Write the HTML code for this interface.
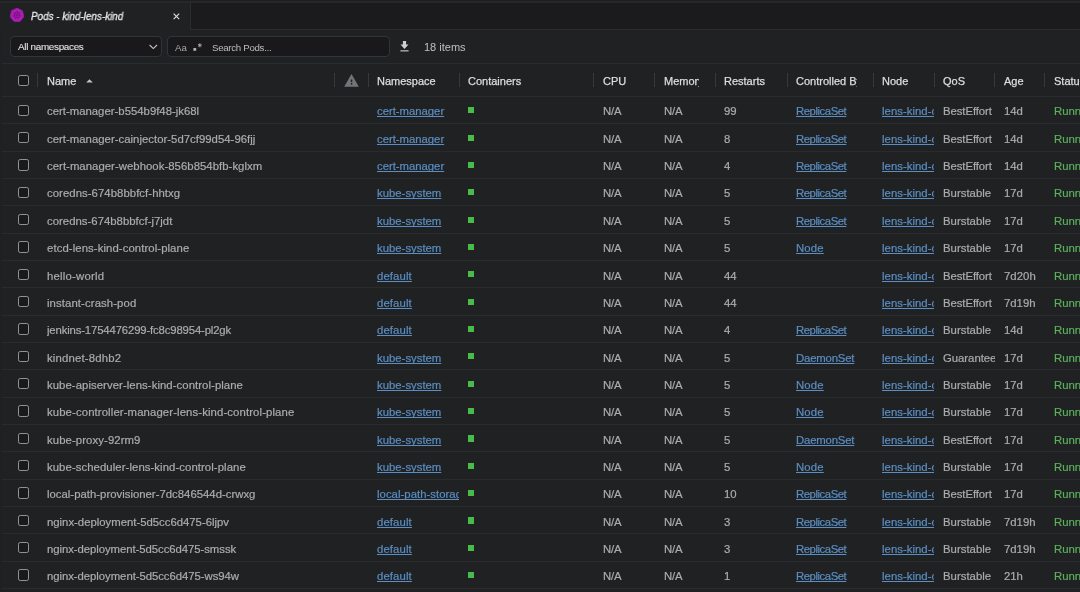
<!DOCTYPE html><html><head><meta charset="utf-8"><style>*{box-sizing:border-box;margin:0;padding:0}
html,body{width:1080px;height:592px;overflow:hidden;background:#202123;font-family:"Liberation Sans",sans-serif;position:relative}
body>*{position:absolute}
.c,.hd,#tabtitle,.items,.sel span,.search span{will-change:transform}
#top{left:0;top:0;width:1080px;height:1px;background:#1e1e20}
#topline{left:0;top:1px;width:1080px;height:2px;background:#262729}
#tabbar{left:0;top:3px;width:1080px;height:27px;background:#1b1b1d}
#tab{left:0;top:3px;width:190px;height:27px;background:#202123}
#tabsep{left:190px;top:2px;width:1px;height:28px;background:#2b2d30}
#tabbot{left:191px;top:29px;width:889px;height:1px;background:#2b2d30}
#k8s{left:10.3px;top:8.4px}
#tabtitle{left:30.5px;top:10.3px;font-size:10.8px;font-style:italic;color:#e8e8e8;white-space:nowrap;-webkit-text-stroke:0.3px #e8e8e8;line-height:12px;transform:scaleX(0.915);transform-origin:0 0}
#tabx{left:173px;top:13.4px}
#leftline{left:0;top:28px;width:2px;height:564px;background:#1f2022}
.sel{left:10px;top:36px;width:152px;height:20.6px;border:1px solid #333437;border-radius:4px;background:#19191b}
.sel span{-webkit-text-stroke:0.1px currentColor;position:absolute;left:6.5px;top:3.7px;font-size:9.9px;letter-spacing:-0.3px;color:#e0e0e0;line-height:12px;white-space:nowrap}
.chev{position:absolute;left:137.5px;top:6.8px}
.search{left:167px;top:36px;width:223px;height:20.6px;border:1px solid #333437;border-radius:4px;background:#19191b}
.search span{position:absolute;top:5.1px;font-size:9.7px;color:#bcbcbc;white-space:nowrap;line-height:12px}
.aa{left:6.5px;color:#a8a8a8 !important}
.rx{position:absolute;left:24.5px;top:6.1px}
.ph{left:44px;letter-spacing:-0.3px}
#dl{left:399.5px;top:40.8px}
.items{left:423.5px;top:40.5px;font-size:11px;color:#c0c0c0;white-space:nowrap;line-height:13px}
#tbline{left:2px;top:63px;width:1078px;height:1px;background:#2a2b2e}
.cb{left:18px;width:11.4px;height:11.4px;border:1.4px solid #939393;border-radius:2.2px;background:#1a1a1c}
.vs{top:73px;width:1px;height:14px;background:#38393c}
.hd{-webkit-text-stroke:0.25px currentColor;top:74.8px;font-size:11px;color:#dedede;white-space:nowrap;overflow:hidden;line-height:13px;height:15px}
#sortup{left:85.6px;top:78.7px}
#warn{left:344px;top:74px}
.hline{left:2px;width:1078px;height:1px;background:#2a2b2e}
.r{left:0;width:1080px;height:27.3px}
.r>*{position:absolute}
.cb2{left:18px;top:8.5px;width:11.3px;height:11.3px;border:1.4px solid #939393;border-radius:2.2px;background:#1a1a1c}
.c{-webkit-text-stroke:0.2px currentColor;top:9.3px;font-size:11.35px;color:#acacac;white-space:nowrap;overflow:hidden;line-height:13px;height:16px}
.lnk{color:#5b8ec2;text-decoration:underline;text-decoration-skip-ink:none}
.grn{left:468px;top:11.1px;width:6.2px;height:6.2px;background:#48bb48}
.run{color:#5cb05c}
</style></head><body>
<div id="top"></div><div id="topline"></div>
<div id="tabbar"></div><div id="tab"></div><div id="tabsep"></div><div id="tabbot"></div>
<div id="leftline"></div>
<svg id="k8s" width="14" height="14" viewBox="0 0 14 14"><polygon points="7.00,0.10 12.47,2.74 13.82,8.66 10.04,13.41 3.96,13.41 0.18,8.66 1.53,2.74" fill="#ae1cb6" stroke="#ae1cb6" stroke-width="0.6" stroke-linejoin="round"/><circle cx="7.0" cy="7.1" r="2.9" fill="none" stroke="#6a1470" stroke-width="0.8"/><circle cx="7.0" cy="7.1" r="1" fill="#6a1470"/><path d="M7.00 5.90L7.00 2.50M7.94 6.35L10.60 4.23M8.17 7.37L11.48 8.12M7.52 8.18L9.00 11.24M6.48 8.18L5.00 11.24M5.83 7.37L2.52 8.12M6.06 6.35L3.40 4.23" stroke="#6a1470" stroke-width="0.6"/></svg>
<div id="tabtitle">Pods - kind-lens-kind</div>
<svg id="tabx" width="7" height="7" viewBox="0 0 7 7"><path d="M0.6 0.6L6.2 6.2M6.2 0.6L0.6 6.2" stroke="#e0e0e0" stroke-width="1.1"/></svg>
<div class="sel"><span>All namespaces</span>
<svg class="chev" width="9" height="6" viewBox="0 0 9 6"><path d="M0.6 1L4.3 4.6L8 1" fill="none" stroke="#c8c8c8" stroke-width="1.1"/></svg></div>
<div class="search"><span class="aa">Aa</span>
<svg class="rx" width="11" height="9" viewBox="0 0 11 9"><rect x="0.4" y="5.0" width="2.8" height="2.8" fill="#b0b0b0"/><path d="M6.8 0.3V4.3M5 1.3L8.6 3.3M5 3.3L8.6 1.3" stroke="#b0b0b0" stroke-width="0.9"/></svg>
<span class="ph">Search Pods...</span></div>
<svg id="dl" width="10" height="11" viewBox="0 0 10 11"><path d="M2.9 0H6.1V3.6H8.5L4.5 7.9L0.5 3.6H2.9Z" fill="#d0d0d0"/><rect x="0.4" y="9.3" width="8.2" height="1.1" fill="#d0d0d0"/></svg>
<div class="items">18 items</div>
<div id="tbline"></div>

<div class="cb" style="top:74.6px"></div>
<div class="vs" style="left:37.3px"></div>
<div class="vs" style="left:334.3px"></div>
<div class="vs" style="left:368.1px"></div>
<div class="vs" style="left:459.1px"></div>
<div class="vs" style="left:593.4px"></div>
<div class="vs" style="left:654.3px"></div>
<div class="vs" style="left:715px"></div>
<div class="vs" style="left:787.3px"></div>
<div class="vs" style="left:873.4px"></div>
<div class="vs" style="left:934.3px"></div>
<div class="vs" style="left:994.4px"></div>
<div class="vs" style="left:1043.9px"></div>
<div class="hd" style="left:46.5px;width:60.00px">Name</div>
<div class="hd" style="left:377.3px;width:81.70px">Namespace</div>
<div class="hd" style="left:468px;width:120.00px">Containers</div>
<div class="hd" style="left:602.8px;width:45.00px">CPU</div>
<div class="hd" style="left:663.6px;width:34.50px">Memory</div>
<div class="hd" style="left:724.2px;width:55.00px">Restarts</div>
<div class="hd" style="left:796px;width:61.00px">Controlled By</div>
<div class="hd" style="left:882px;width:51.90px">Node</div>
<div class="hd" style="left:943px;width:51.50px">QoS</div>
<div class="hd" style="left:1003.5px;width:40.00px">Age</div>
<div class="hd" style="left:1053.5px;width:40.00px">Status</div>
<svg id="sortup" width="7" height="4" viewBox="0 0 7 4"><path d="M0.2 3.6L3.5 0.2L6.8 3.6Z" fill="#c4c4c4"/></svg>
<svg id="warn" width="15" height="13" viewBox="0 0 15 13"><path d="M7.5 0L14.8 12.8H0.2Z" fill="#737477"/><rect x="6.8" y="5.5" width="1.5" height="2.6" fill="#202123"/><rect x="6.8" y="9" width="1.5" height="1.6" fill="#202123"/></svg>
<div class="hline" style="top:96.1px"></div>
<div class="r" style="top:96.20px">
<div class="cb2"></div>
<div class="c" style="left:46.50px;width:285.00px;letter-spacing:0.006px">cert-manager-b554b9f48-jk68l</div>
<div class="c lnk" style="left:377.30px;width:81.70px;letter-spacing:-0.026px">cert-manager</div>
<div class="grn"></div>
<div class="c" style="left:602.80px;width:45.00px;letter-spacing:-0.172px">N/A</div>
<div class="c" style="left:663.60px;width:49.00px;letter-spacing:-0.172px">N/A</div>
<div class="c" style="left:724.20px;width:55.00px">99</div>
<div class="c lnk" style="left:796.00px;width:77.00px;letter-spacing:-0.456px">ReplicaSet</div>
<div class="c lnk" style="left:882.00px;width:51.90px;letter-spacing:0.032px">lens-kind-control-plane</div>
<div class="c" style="left:943.00px;width:51.50px;letter-spacing:-0.072px">BestEffort</div>
<div class="c" style="left:1003.50px;width:40.00px">14d</div>
<div class="c run" style="left:1053.50px;width:40.00px">Running</div>
</div>
<div class="hline" style="top:123.43px"></div>
<div class="r" style="top:123.53px">
<div class="cb2"></div>
<div class="c" style="left:46.50px;width:285.00px;letter-spacing:0.022px">cert-manager-cainjector-5d7cf99d54-96fjj</div>
<div class="c lnk" style="left:377.30px;width:81.70px;letter-spacing:-0.026px">cert-manager</div>
<div class="grn"></div>
<div class="c" style="left:602.80px;width:45.00px;letter-spacing:-0.172px">N/A</div>
<div class="c" style="left:663.60px;width:49.00px;letter-spacing:-0.172px">N/A</div>
<div class="c" style="left:724.20px;width:55.00px">8</div>
<div class="c lnk" style="left:796.00px;width:77.00px;letter-spacing:-0.456px">ReplicaSet</div>
<div class="c lnk" style="left:882.00px;width:51.90px;letter-spacing:0.032px">lens-kind-control-plane</div>
<div class="c" style="left:943.00px;width:51.50px;letter-spacing:-0.072px">BestEffort</div>
<div class="c" style="left:1003.50px;width:40.00px">14d</div>
<div class="c run" style="left:1053.50px;width:40.00px">Running</div>
</div>
<div class="hline" style="top:150.76px"></div>
<div class="r" style="top:150.87px">
<div class="cb2"></div>
<div class="c" style="left:46.50px;width:285.00px;letter-spacing:0.039px">cert-manager-webhook-856b854bfb-kglxm</div>
<div class="c lnk" style="left:377.30px;width:81.70px;letter-spacing:-0.026px">cert-manager</div>
<div class="grn"></div>
<div class="c" style="left:602.80px;width:45.00px;letter-spacing:-0.172px">N/A</div>
<div class="c" style="left:663.60px;width:49.00px;letter-spacing:-0.172px">N/A</div>
<div class="c" style="left:724.20px;width:55.00px">4</div>
<div class="c lnk" style="left:796.00px;width:77.00px;letter-spacing:-0.456px">ReplicaSet</div>
<div class="c lnk" style="left:882.00px;width:51.90px;letter-spacing:0.032px">lens-kind-control-plane</div>
<div class="c" style="left:943.00px;width:51.50px;letter-spacing:-0.072px">BestEffort</div>
<div class="c" style="left:1003.50px;width:40.00px">14d</div>
<div class="c run" style="left:1053.50px;width:40.00px">Running</div>
</div>
<div class="hline" style="top:178.09px"></div>
<div class="r" style="top:178.20px">
<div class="cb2"></div>
<div class="c" style="left:46.50px;width:285.00px;letter-spacing:0.057px">coredns-674b8bbfcf-hhtxg</div>
<div class="c lnk" style="left:377.30px;width:81.70px">kube-system</div>
<div class="grn"></div>
<div class="c" style="left:602.80px;width:45.00px;letter-spacing:-0.172px">N/A</div>
<div class="c" style="left:663.60px;width:49.00px;letter-spacing:-0.172px">N/A</div>
<div class="c" style="left:724.20px;width:55.00px">5</div>
<div class="c lnk" style="left:796.00px;width:77.00px;letter-spacing:-0.456px">ReplicaSet</div>
<div class="c lnk" style="left:882.00px;width:51.90px;letter-spacing:0.032px">lens-kind-control-plane</div>
<div class="c" style="left:943.00px;width:51.50px;letter-spacing:0.023px">Burstable</div>
<div class="c" style="left:1003.50px;width:40.00px;letter-spacing:-0.009px">17d</div>
<div class="c run" style="left:1053.50px;width:40.00px">Running</div>
</div>
<div class="hline" style="top:205.42px"></div>
<div class="r" style="top:205.54px">
<div class="cb2"></div>
<div class="c" style="left:46.50px;width:285.00px;letter-spacing:0.021px">coredns-674b8bbfcf-j7jdt</div>
<div class="c lnk" style="left:377.30px;width:81.70px">kube-system</div>
<div class="grn"></div>
<div class="c" style="left:602.80px;width:45.00px;letter-spacing:-0.172px">N/A</div>
<div class="c" style="left:663.60px;width:49.00px;letter-spacing:-0.172px">N/A</div>
<div class="c" style="left:724.20px;width:55.00px">5</div>
<div class="c lnk" style="left:796.00px;width:77.00px;letter-spacing:-0.456px">ReplicaSet</div>
<div class="c lnk" style="left:882.00px;width:51.90px;letter-spacing:0.032px">lens-kind-control-plane</div>
<div class="c" style="left:943.00px;width:51.50px;letter-spacing:0.023px">Burstable</div>
<div class="c" style="left:1003.50px;width:40.00px;letter-spacing:-0.009px">17d</div>
<div class="c run" style="left:1053.50px;width:40.00px">Running</div>
</div>
<div class="hline" style="top:232.75px"></div>
<div class="r" style="top:232.87px">
<div class="cb2"></div>
<div class="c" style="left:46.50px;width:285.00px;letter-spacing:0.083px">etcd-lens-kind-control-plane</div>
<div class="c lnk" style="left:377.30px;width:81.70px">kube-system</div>
<div class="grn"></div>
<div class="c" style="left:602.80px;width:45.00px;letter-spacing:-0.172px">N/A</div>
<div class="c" style="left:663.60px;width:49.00px;letter-spacing:-0.172px">N/A</div>
<div class="c" style="left:724.20px;width:55.00px">5</div>
<div class="c lnk" style="left:796.00px;width:77.00px;letter-spacing:0.163px">Node</div>
<div class="c lnk" style="left:882.00px;width:51.90px;letter-spacing:0.032px">lens-kind-control-plane</div>
<div class="c" style="left:943.00px;width:51.50px;letter-spacing:0.023px">Burstable</div>
<div class="c" style="left:1003.50px;width:40.00px;letter-spacing:-0.009px">17d</div>
<div class="c run" style="left:1053.50px;width:40.00px">Running</div>
</div>
<div class="hline" style="top:260.08px"></div>
<div class="r" style="top:260.21px">
<div class="cb2"></div>
<div class="c" style="left:46.50px;width:285.00px;letter-spacing:0.226px">hello-world</div>
<div class="c lnk" style="left:377.30px;width:81.70px;letter-spacing:0.115px">default</div>
<div class="grn"></div>
<div class="c" style="left:602.80px;width:45.00px;letter-spacing:-0.172px">N/A</div>
<div class="c" style="left:663.60px;width:49.00px;letter-spacing:-0.172px">N/A</div>
<div class="c" style="left:724.20px;width:55.00px">44</div>
<div class="c lnk" style="left:882.00px;width:51.90px;letter-spacing:0.032px">lens-kind-control-plane</div>
<div class="c" style="left:943.00px;width:51.50px;letter-spacing:-0.072px">BestEffort</div>
<div class="c" style="left:1003.50px;width:40.00px;letter-spacing:0.041px">7d20h</div>
<div class="c run" style="left:1053.50px;width:40.00px">Running</div>
</div>
<div class="hline" style="top:287.41px"></div>
<div class="r" style="top:287.54px">
<div class="cb2"></div>
<div class="c" style="left:46.50px;width:285.00px;letter-spacing:0.098px">instant-crash-pod</div>
<div class="c lnk" style="left:377.30px;width:81.70px;letter-spacing:0.115px">default</div>
<div class="grn"></div>
<div class="c" style="left:602.80px;width:45.00px;letter-spacing:-0.172px">N/A</div>
<div class="c" style="left:663.60px;width:49.00px;letter-spacing:-0.172px">N/A</div>
<div class="c" style="left:724.20px;width:55.00px">44</div>
<div class="c lnk" style="left:882.00px;width:51.90px;letter-spacing:0.032px">lens-kind-control-plane</div>
<div class="c" style="left:943.00px;width:51.50px;letter-spacing:-0.072px">BestEffort</div>
<div class="c" style="left:1003.50px;width:40.00px">7d19h</div>
<div class="c run" style="left:1053.50px;width:40.00px">Running</div>
</div>
<div class="hline" style="top:314.74px"></div>
<div class="r" style="top:314.88px">
<div class="cb2"></div>
<div class="c" style="left:46.50px;width:285.00px;letter-spacing:-0.152px">jenkins-1754476299-fc8c98954-pl2gk</div>
<div class="c lnk" style="left:377.30px;width:81.70px;letter-spacing:0.115px">default</div>
<div class="grn"></div>
<div class="c" style="left:602.80px;width:45.00px;letter-spacing:-0.172px">N/A</div>
<div class="c" style="left:663.60px;width:49.00px;letter-spacing:-0.172px">N/A</div>
<div class="c" style="left:724.20px;width:55.00px">4</div>
<div class="c lnk" style="left:796.00px;width:77.00px;letter-spacing:-0.456px">ReplicaSet</div>
<div class="c lnk" style="left:882.00px;width:51.90px;letter-spacing:0.032px">lens-kind-control-plane</div>
<div class="c" style="left:943.00px;width:51.50px;letter-spacing:0.023px">Burstable</div>
<div class="c" style="left:1003.50px;width:40.00px">14d</div>
<div class="c run" style="left:1053.50px;width:40.00px">Running</div>
</div>
<div class="hline" style="top:342.07px"></div>
<div class="r" style="top:342.21px">
<div class="cb2"></div>
<div class="c" style="left:46.50px;width:285.00px;letter-spacing:0.176px">kindnet-8dhb2</div>
<div class="c lnk" style="left:377.30px;width:81.70px">kube-system</div>
<div class="grn"></div>
<div class="c" style="left:602.80px;width:45.00px;letter-spacing:-0.172px">N/A</div>
<div class="c" style="left:663.60px;width:49.00px;letter-spacing:-0.172px">N/A</div>
<div class="c" style="left:724.20px;width:55.00px">5</div>
<div class="c lnk" style="left:796.00px;width:77.00px;letter-spacing:-0.181px">DaemonSet</div>
<div class="c lnk" style="left:882.00px;width:51.90px;letter-spacing:0.032px">lens-kind-control-plane</div>
<div class="c" style="left:943.00px;width:51.50px;letter-spacing:-0.024px">Guaranteed</div>
<div class="c" style="left:1003.50px;width:40.00px;letter-spacing:-0.009px">17d</div>
<div class="c run" style="left:1053.50px;width:40.00px">Running</div>
</div>
<div class="hline" style="top:369.40px"></div>
<div class="r" style="top:369.55px">
<div class="cb2"></div>
<div class="c" style="left:46.50px;width:285.00px;letter-spacing:0.063px">kube-apiserver-lens-kind-control-plane</div>
<div class="c lnk" style="left:377.30px;width:81.70px">kube-system</div>
<div class="grn"></div>
<div class="c" style="left:602.80px;width:45.00px;letter-spacing:-0.172px">N/A</div>
<div class="c" style="left:663.60px;width:49.00px;letter-spacing:-0.172px">N/A</div>
<div class="c" style="left:724.20px;width:55.00px">5</div>
<div class="c lnk" style="left:796.00px;width:77.00px;letter-spacing:0.163px">Node</div>
<div class="c lnk" style="left:882.00px;width:51.90px;letter-spacing:0.032px">lens-kind-control-plane</div>
<div class="c" style="left:943.00px;width:51.50px;letter-spacing:0.023px">Burstable</div>
<div class="c" style="left:1003.50px;width:40.00px;letter-spacing:-0.009px">17d</div>
<div class="c run" style="left:1053.50px;width:40.00px">Running</div>
</div>
<div class="hline" style="top:396.73px"></div>
<div class="r" style="top:396.88px">
<div class="cb2"></div>
<div class="c" style="left:46.50px;width:285.00px;letter-spacing:0.111px">kube-controller-manager-lens-kind-control-plane</div>
<div class="c lnk" style="left:377.30px;width:81.70px">kube-system</div>
<div class="grn"></div>
<div class="c" style="left:602.80px;width:45.00px;letter-spacing:-0.172px">N/A</div>
<div class="c" style="left:663.60px;width:49.00px;letter-spacing:-0.172px">N/A</div>
<div class="c" style="left:724.20px;width:55.00px">5</div>
<div class="c lnk" style="left:796.00px;width:77.00px;letter-spacing:0.163px">Node</div>
<div class="c lnk" style="left:882.00px;width:51.90px;letter-spacing:0.032px">lens-kind-control-plane</div>
<div class="c" style="left:943.00px;width:51.50px;letter-spacing:0.023px">Burstable</div>
<div class="c" style="left:1003.50px;width:40.00px;letter-spacing:-0.009px">17d</div>
<div class="c run" style="left:1053.50px;width:40.00px">Running</div>
</div>
<div class="hline" style="top:424.06px"></div>
<div class="r" style="top:424.22px">
<div class="cb2"></div>
<div class="c" style="left:46.50px;width:285.00px;letter-spacing:0.091px">kube-proxy-92rm9</div>
<div class="c lnk" style="left:377.30px;width:81.70px">kube-system</div>
<div class="grn"></div>
<div class="c" style="left:602.80px;width:45.00px;letter-spacing:-0.172px">N/A</div>
<div class="c" style="left:663.60px;width:49.00px;letter-spacing:-0.172px">N/A</div>
<div class="c" style="left:724.20px;width:55.00px">5</div>
<div class="c lnk" style="left:796.00px;width:77.00px;letter-spacing:-0.181px">DaemonSet</div>
<div class="c lnk" style="left:882.00px;width:51.90px;letter-spacing:0.032px">lens-kind-control-plane</div>
<div class="c" style="left:943.00px;width:51.50px;letter-spacing:-0.072px">BestEffort</div>
<div class="c" style="left:1003.50px;width:40.00px;letter-spacing:-0.009px">17d</div>
<div class="c run" style="left:1053.50px;width:40.00px">Running</div>
</div>
<div class="hline" style="top:451.39px"></div>
<div class="r" style="top:451.56px">
<div class="cb2"></div>
<div class="c" style="left:46.50px;width:285.00px;letter-spacing:0.071px">kube-scheduler-lens-kind-control-plane</div>
<div class="c lnk" style="left:377.30px;width:81.70px">kube-system</div>
<div class="grn"></div>
<div class="c" style="left:602.80px;width:45.00px;letter-spacing:-0.172px">N/A</div>
<div class="c" style="left:663.60px;width:49.00px;letter-spacing:-0.172px">N/A</div>
<div class="c" style="left:724.20px;width:55.00px">5</div>
<div class="c lnk" style="left:796.00px;width:77.00px;letter-spacing:0.163px">Node</div>
<div class="c lnk" style="left:882.00px;width:51.90px;letter-spacing:0.032px">lens-kind-control-plane</div>
<div class="c" style="left:943.00px;width:51.50px;letter-spacing:0.023px">Burstable</div>
<div class="c" style="left:1003.50px;width:40.00px;letter-spacing:-0.009px">17d</div>
<div class="c run" style="left:1053.50px;width:40.00px">Running</div>
</div>
<div class="hline" style="top:478.72px"></div>
<div class="r" style="top:478.89px">
<div class="cb2"></div>
<div class="c" style="left:46.50px;width:285.00px;letter-spacing:0.009px">local-path-provisioner-7dc846544d-crwxg</div>
<div class="c lnk" style="left:377.30px;width:81.70px;letter-spacing:0.032px">local-path-storage</div>
<div class="grn"></div>
<div class="c" style="left:602.80px;width:45.00px;letter-spacing:-0.172px">N/A</div>
<div class="c" style="left:663.60px;width:49.00px;letter-spacing:-0.172px">N/A</div>
<div class="c" style="left:724.20px;width:55.00px">10</div>
<div class="c lnk" style="left:796.00px;width:77.00px;letter-spacing:-0.456px">ReplicaSet</div>
<div class="c lnk" style="left:882.00px;width:51.90px;letter-spacing:0.032px">lens-kind-control-plane</div>
<div class="c" style="left:943.00px;width:51.50px;letter-spacing:-0.072px">BestEffort</div>
<div class="c" style="left:1003.50px;width:40.00px;letter-spacing:-0.009px">17d</div>
<div class="c run" style="left:1053.50px;width:40.00px">Running</div>
</div>
<div class="hline" style="top:506.05px"></div>
<div class="r" style="top:506.22px">
<div class="cb2"></div>
<div class="c" style="left:46.50px;width:285.00px;letter-spacing:-0.008px">nginx-deployment-5d5cc6d475-6ljpv</div>
<div class="c lnk" style="left:377.30px;width:81.70px;letter-spacing:0.115px">default</div>
<div class="grn"></div>
<div class="c" style="left:602.80px;width:45.00px;letter-spacing:-0.172px">N/A</div>
<div class="c" style="left:663.60px;width:49.00px;letter-spacing:-0.172px">N/A</div>
<div class="c" style="left:724.20px;width:55.00px">3</div>
<div class="c lnk" style="left:796.00px;width:77.00px;letter-spacing:-0.456px">ReplicaSet</div>
<div class="c lnk" style="left:882.00px;width:51.90px;letter-spacing:0.032px">lens-kind-control-plane</div>
<div class="c" style="left:943.00px;width:51.50px;letter-spacing:0.023px">Burstable</div>
<div class="c" style="left:1003.50px;width:40.00px">7d19h</div>
<div class="c run" style="left:1053.50px;width:40.00px">Running</div>
</div>
<div class="hline" style="top:533.38px"></div>
<div class="r" style="top:533.56px">
<div class="cb2"></div>
<div class="c" style="left:46.50px;width:285.00px;letter-spacing:-0.059px">nginx-deployment-5d5cc6d475-smssk</div>
<div class="c lnk" style="left:377.30px;width:81.70px;letter-spacing:0.115px">default</div>
<div class="grn"></div>
<div class="c" style="left:602.80px;width:45.00px;letter-spacing:-0.172px">N/A</div>
<div class="c" style="left:663.60px;width:49.00px;letter-spacing:-0.172px">N/A</div>
<div class="c" style="left:724.20px;width:55.00px">3</div>
<div class="c lnk" style="left:796.00px;width:77.00px;letter-spacing:-0.456px">ReplicaSet</div>
<div class="c lnk" style="left:882.00px;width:51.90px;letter-spacing:0.032px">lens-kind-control-plane</div>
<div class="c" style="left:943.00px;width:51.50px;letter-spacing:0.023px">Burstable</div>
<div class="c" style="left:1003.50px;width:40.00px">7d19h</div>
<div class="c run" style="left:1053.50px;width:40.00px">Running</div>
</div>
<div class="hline" style="top:560.71px"></div>
<div class="r" style="top:560.89px">
<div class="cb2"></div>
<div class="c" style="left:46.50px;width:285.00px;letter-spacing:-0.050px">nginx-deployment-5d5cc6d475-ws94w</div>
<div class="c lnk" style="left:377.30px;width:81.70px;letter-spacing:0.115px">default</div>
<div class="grn"></div>
<div class="c" style="left:602.80px;width:45.00px;letter-spacing:-0.172px">N/A</div>
<div class="c" style="left:663.60px;width:49.00px;letter-spacing:-0.172px">N/A</div>
<div class="c" style="left:724.20px;width:55.00px">1</div>
<div class="c lnk" style="left:796.00px;width:77.00px;letter-spacing:-0.456px">ReplicaSet</div>
<div class="c lnk" style="left:882.00px;width:51.90px;letter-spacing:0.032px">lens-kind-control-plane</div>
<div class="c" style="left:943.00px;width:51.50px;letter-spacing:0.023px">Burstable</div>
<div class="c" style="left:1003.50px;width:40.00px">21h</div>
<div class="c run" style="left:1053.50px;width:40.00px">Running</div>
</div>
<div class="hline" style="top:588.04px"></div>
</body></html>
